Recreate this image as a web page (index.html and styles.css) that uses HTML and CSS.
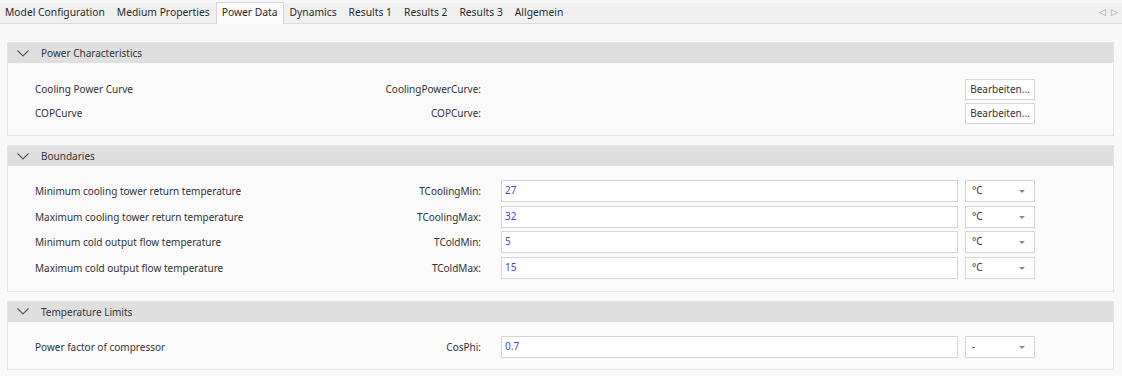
FILE: index.html
```html
<!DOCTYPE html>
<html lang="de">
<head>
  <meta charset="UTF-8" />
  <title>Power Data</title>
  <link rel="stylesheet" href="styles.css">
</head>
<body>
  <div class="tabbar">
    <div class="tabs">
      <span class="tab">Model Configuration</span>
      <span class="tab">Medium Properties</span>
      <span class="tab active">Power Data</span>
      <span class="tab">Dynamics</span>
      <span class="tab">Results 1</span>
      <span class="tab">Results 2</span>
      <span class="tab">Results 3</span>
      <span class="tab">Allgemein</span>
    </div>
    <div class="scroll"><span>&#9665;</span><span>&#9655;</span></div>
  </div>

  <div class="content">
    <section class="group">
      <div class="group-head">
        <svg class="chev" width="12" height="7" viewBox="0 0 12 7"><path d="M0.5 0.5 L6 6 L11.5 0.5" fill="none" stroke="#555" stroke-width="1.1"/></svg>
        Power Characteristics
      </div>
      <div class="group-body tight">
        <div class="row">
          <span class="desc">Cooling Power Curve</span>
          <span class="name">CoolingPowerCurve:</span>
          <span class="spacer"></span>
          <button class="btn">Bearbeiten...</button>
        </div>
        <div class="row">
          <span class="desc">COPCurve</span>
          <span class="name">COPCurve:</span>
          <span class="spacer"></span>
          <button class="btn">Bearbeiten...</button>
        </div>
      </div>
    </section>

    <section class="group">
      <div class="group-head">
        <svg class="chev" width="12" height="7" viewBox="0 0 12 7"><path d="M0.5 0.5 L6 6 L11.5 0.5" fill="none" stroke="#555" stroke-width="1.1"/></svg>
        Boundaries
      </div>
      <div class="group-body">
        <div class="row">
          <span class="desc">Minimum cooling tower return temperature</span>
          <span class="name">TCoolingMin:</span>
          <span class="field">27</span>
          <span class="unit">°C<i class="arrow"></i></span>
        </div>
        <div class="row">
          <span class="desc">Maximum cooling tower return temperature</span>
          <span class="name">TCoolingMax:</span>
          <span class="field">32</span>
          <span class="unit">°C<i class="arrow"></i></span>
        </div>
        <div class="row">
          <span class="desc">Minimum cold output flow temperature</span>
          <span class="name">TColdMin:</span>
          <span class="field">5</span>
          <span class="unit">°C<i class="arrow"></i></span>
        </div>
        <div class="row">
          <span class="desc">Maximum cold output flow temperature</span>
          <span class="name">TColdMax:</span>
          <span class="field">15</span>
          <span class="unit">°C<i class="arrow"></i></span>
        </div>
      </div>
    </section>

    <section class="group">
      <div class="group-head">
        <svg class="chev" width="12" height="7" viewBox="0 0 12 7"><path d="M0.5 0.5 L6 6 L11.5 0.5" fill="none" stroke="#555" stroke-width="1.1"/></svg>
        Temperature Limits
      </div>
      <div class="group-body last">
        <div class="row">
          <span class="desc">Power factor of compressor</span>
          <span class="name">CosPhi:</span>
          <span class="field">0.7</span>
          <span class="unit">-<i class="arrow"></i></span>
        </div>
      </div>
    </section>
  </div>
</body>
</html>
```

FILE: styles.css
```css
body, html {
  margin: 0;
  padding: 0;
  height: 100%;
  overflow: hidden;
  font-family: 'Noto Sans', 'Open Sans', sans-serif;
  background: #f9f9f9;
  color: #333;
}

.tabbar {
  display: flex;
  justify-content: space-between;
  align-items: flex-end;
  height: 24px;
  background: #f0f0f0;
  border-top: 3px solid #f7f7f7;
  box-sizing: border-box;
  border-bottom: 1px solid #dcdcdc;
}

.tabs {
  display: flex;
  font-size: 10.3px;
  color: #2a2a2a;
}

.tab {
  padding: 0 5px 0 4px;
  height: 20px;
  line-height: 18px;
  border: 1px solid transparent;
  border-bottom: none;
}

.tab + .tab {
  padding-left: 5px;
}

.tab.active {
  background: #fbfbfb;
  border-color: #d6d6d6;
  margin-bottom: -1px;
  height: 21px;
}

.scroll {
  display: flex;
  gap: 5px;
  padding-right: 4px;
  height: 20px;
  line-height: 18px;
  font-size: 9px;
  color: #9a9a9a;
}

.content {
  padding: 18px 8px 0 7px;
  display: flex;
  flex-direction: column;
  gap: 9px;
}

.group {
  border: 1px solid #e4e4e4;
  background: #fafafa;
}

.group-head {
  display: flex;
  align-items: center;
  height: 20px;
  background: #dfdfdf;
  font-size: 10px;
  color: #333;
}

.chev {
  margin: 0 12px 0 9px;
}

.group-body {
  display: flex;
  flex-direction: column;
  gap: 3.5px;
  padding: 14px 0 12px 0;
}

.group-body.tight {
  gap: 2px;
  padding: 15px 0 11px 0;
}

.group-body.last {
  padding-bottom: 11px;
}

.row {
  display: grid;
  grid-template-columns: 330px 116px 484px 70px;
  align-items: center;
  height: 22px;
  padding-left: 27px;
  font-size: 10px;
}

.name {
  text-align: right;
}

.field {
  margin-left: 20px;
  margin-right: 7px;
  height: 22px;
  box-sizing: border-box;
  background: #fff;
  border: 1px solid #d6d6d6;
  color: #4646c8;
  line-height: 19px;
  padding-left: 3px;
}

.spacer {
  margin-left: 20px;
  margin-right: 7px;
}

.btn {
  height: 21px;
  margin: 0;
  padding: 0;
  background: #fff;
  border: 1px solid #d6d6d6;
  font-family: inherit;
  font-size: 10px;
  color: #333;
}

.unit {
  position: relative;
  height: 22px;
  box-sizing: border-box;
  background: #fff;
  border: 1px solid #d6d6d6;
  line-height: 19px;
  padding-left: 6px;
}

.arrow {
  position: absolute;
  right: 9px;
  top: 9px;
  border-left: 3px solid transparent;
  border-right: 3px solid transparent;
  border-top: 3px solid #888;
}
```
